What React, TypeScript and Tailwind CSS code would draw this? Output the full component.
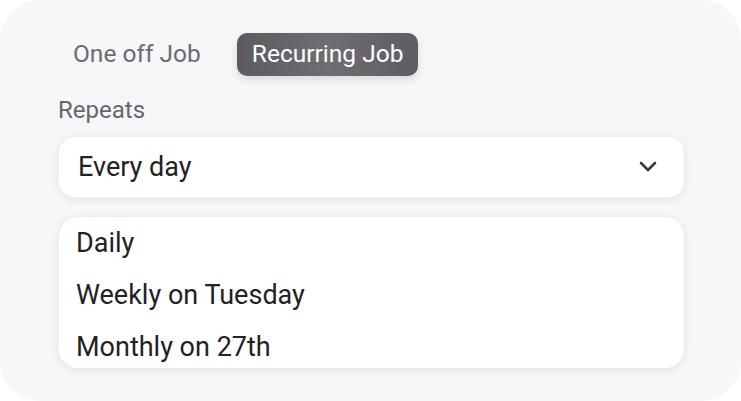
import React from "react";

export default function App() {
  return (
    <div className="w-[741px] h-[401px] bg-white" style={{ fontFamily: "Roboto, 'Liberation Sans', sans-serif" }}>
      <div className="w-full h-full rounded-[40px] bg-[#f7f7f9] pt-[33px] pl-[58px] pr-[56px]">
        <div className="flex items-center gap-[36px] pl-[15px]">
          <span className="text-[24.5px] text-[#6b6b72] leading-none">One off Job</span>
          <div className="h-[43px] px-[15px] flex items-center rounded-[10px] bg-gradient-to-r from-[#5b5b60] via-[#6d6d72] to-[#5d5d62] shadow-[0_4px_10px_rgba(0,0,0,0.12)]">
            <span className="text-[24.5px] text-white leading-none">Recurring Job</span>
          </div>
        </div>
        <div className="mt-[22px] text-[24px] text-[#66666d] leading-none">Repeats</div>
        <div className="mt-[14px] h-[62px] bg-white rounded-[16px] shadow-[0_2px_8px_rgba(0,0,0,0.08)] border border-[#eeeef1] flex items-center justify-between pl-[19px] pr-[26px]">
          <span className="text-[27px] text-[#222226]">Every day</span>
          <svg width="20" height="12" viewBox="0 0 20 12" fill="none">
            <path d="M3 2 L10 9 L17 2" stroke="#3a3a3e" strokeWidth="2.6" strokeLinecap="round" strokeLinejoin="round" />
          </svg>
        </div>
        <div className="mt-[18px] h-[153px] overflow-hidden bg-white rounded-[20px] shadow-[0_2px_8px_rgba(0,0,0,0.08)] border border-[#eeeef1] flex flex-col pl-[17px]">
          <div className="h-[52px] shrink-0 flex items-center text-[27px] text-[#222226]">Daily</div>
          <div className="h-[52px] shrink-0 flex items-center text-[27px] text-[#222226]">Weekly on Tuesday</div>
          <div className="h-[52px] shrink-0 flex items-center text-[27px] text-[#222226]">Monthly on 27th</div>
        </div>
      </div>
    </div>
  );
}
